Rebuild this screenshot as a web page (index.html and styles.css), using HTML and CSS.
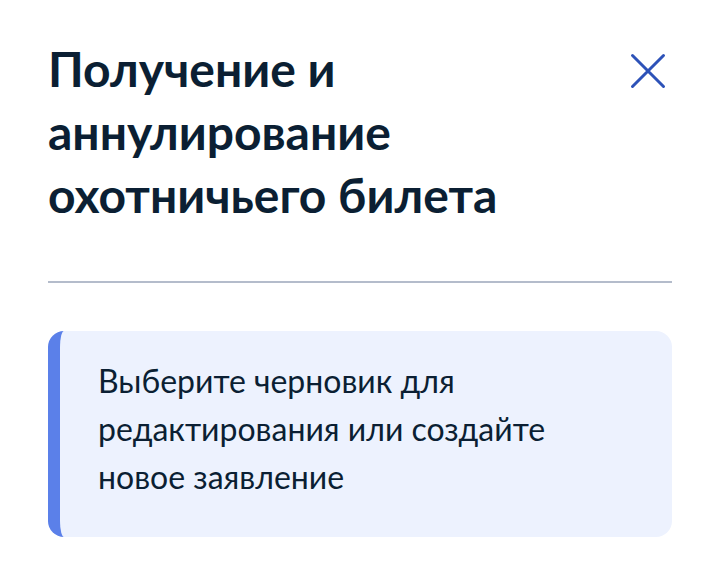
FILE: index.html
```html
<!DOCTYPE html>
<html lang="ru">
<head>
  <meta charset="UTF-8">
  <title>Получение и аннулирование охотничьего билета</title>
  <link rel="stylesheet" href="styles.css">
</head>
<body>
  <div class="modal">
    <div class="modal-header">
      <h1 class="modal-title">Получение и аннулирование охотничьего билета</h1>
      <button class="close-btn" aria-label="Закрыть">
        <svg width="36" height="36" viewBox="0 0 36 36">
          <path d="M2.5 2.5 L33.5 33.5 M33.5 2.5 L2.5 33.5" stroke="#2d52b8" stroke-width="3" stroke-linecap="round" fill="none"/>
        </svg>
      </button>
    </div>

    <hr class="divider">

    <div class="notice">
      <p>Выберите черновик для редактирования или создайте новое заявление</p>
    </div>
  </div>
</body>
</html>
```

FILE: styles.css
```css
* {
  margin: 0;
  padding: 0;
  box-sizing: border-box;
  font-family: Lato, "Noto Sans", sans-serif;
}

body {
  background: #fff;
  color: #0b1f33;
}

.modal {
  padding: 37px 48px 0;
}

.modal-header {
  display: flex;
  align-items: flex-start;
  justify-content: space-between;
}

.modal-title {
  font-size: 48px;
  font-weight: 700;
  line-height: 63px;
  max-width: 470px;
}

.close-btn {
  background: none;
  border: none;
  cursor: pointer;
  margin-top: 16px;
  margin-right: 6px;
}

.divider {
  border: none;
  border-top: 2px solid #b4bccb;
  margin-top: 55px;
}

/* Info block with accent line */
.notice {
  margin-top: 48px;
  background-color: #edf2fe;
  border-left: 12px solid #5b80e9;
  border-radius: 16px;
  padding: 26px 40px 36px 38px;
}

.notice p {
  font-size: 32px;
  line-height: 48px;
  max-width: 480px;
}
```
